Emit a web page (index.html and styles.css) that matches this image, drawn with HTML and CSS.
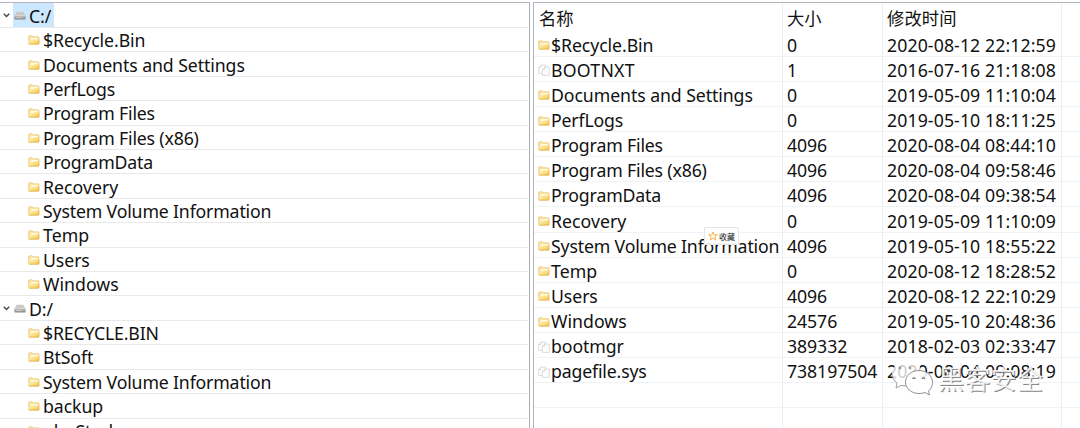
FILE: index.html
```html
<!DOCTYPE html>
<html lang="zh">
<head>
<meta charset="utf-8">
<title>文件管理</title>
<link rel="stylesheet" href="styles.css">
</head>
<body>
<svg class="defs" width="0" height="0" aria-hidden="true">
  <defs>
    <linearGradient id="gold" x1="0" y1="0" x2="1" y2="1"><stop offset="0" stop-color="#fff3c4"/><stop offset=".55" stop-color="#fbdf80"/><stop offset="1" stop-color="#f2c04a"/></linearGradient>
    <linearGradient id="metal" x1="0" y1="0" x2="0" y2="1"><stop offset="0" stop-color="#d0d0d0"/><stop offset="1" stop-color="#858585"/></linearGradient>
  </defs>
  <symbol id="folder" viewBox="0 0 12 10">
    <path d="M.7 8.5V1.6Q.7.8 1.5.8h2.7l1 1h5q.8 0 .8.8v5.9q0 .7-.8.7H1.4Q.7 9.2.7 8.5z" fill="#fae3a0" stroke="#eac673" stroke-width=".7"/>
    <path d="M2.8 3h6.9v2H2.8z" fill="#fffbe8"/>
    <path d="M1 8.9V5.2h3.4l1-1h5.5v4.7z" fill="url(#gold)"/>
    <path d="M1 9.1h9.8V4.6" fill="none" stroke="#e6b45a" stroke-width=".7"/>
  </symbol>
  <symbol id="drive" viewBox="0 0 12 9">
    <path d="M2.6.7h6.8l2.2 4.1H.4z" fill="#c8c8c8"/>
    <rect x=".3" y="4" width="11.4" height="4.4" rx=".9" fill="url(#metal)"/>
    <path d="M1 4.4h10M2 6.6h6" stroke="#e2e2e2" stroke-width=".6"/>
  </symbol>
  <symbol id="file" viewBox="0 0 12 12">
    <path d="M4.4 9.4H.7V3.3L3 1.1h4.6v2M.7 3.5H3V1.2" fill="#fff" stroke="#d2d2d2" stroke-width=".75"/>
    <path d="M4.400 5.200l2.200-2.100h4.700v8.200H4.400zM4.400 5.400h2.300V3.200" fill="#fff" stroke="#cdcdcd" stroke-width=".75"/>
  </symbol>
  <symbol id="chevron" viewBox="0 0 7 5"><path d="M.8.8l2.7 2.7L6.2.8" fill="none" stroke="#444" stroke-width="1.4"/></symbol>
</svg>
<main class="window">
  <ul class="tree">
    <li class="node drive"><svg class="chevron"><use href="#chevron"/></svg><span class="label selected"><svg class="drive-icon"><use href="#drive"/></svg>C:/</span></li>
    <li class="node"><svg class="icon"><use href="#folder"/></svg>$Recycle.Bin</li>
    <li class="node"><svg class="icon"><use href="#folder"/></svg>Documents and Settings</li>
    <li class="node tight"><svg class="icon"><use href="#folder"/></svg>PerfLogs</li>
    <li class="node tight"><svg class="icon"><use href="#folder"/></svg>Program Files</li>
    <li class="node tight"><svg class="icon"><use href="#folder"/></svg>Program Files (x86)</li>
    <li class="node tight"><svg class="icon"><use href="#folder"/></svg>ProgramData</li>
    <li class="node wide"><svg class="icon"><use href="#folder"/></svg>Recovery</li>
    <li class="node tight"><svg class="icon"><use href="#folder"/></svg>System Volume Information</li>
    <li class="node wide"><svg class="icon"><use href="#folder"/></svg>Temp</li>
    <li class="node"><svg class="icon"><use href="#folder"/></svg>Users</li>
    <li class="node wide"><svg class="icon"><use href="#folder"/></svg>Windows</li>
    <li class="node drive"><svg class="chevron"><use href="#chevron"/></svg><span class="label"><svg class="drive-icon"><use href="#drive"/></svg>D:/</span></li>
    <li class="node tight"><svg class="icon"><use href="#folder"/></svg>$RECYCLE.BIN</li>
    <li class="node"><svg class="icon"><use href="#folder"/></svg>BtSoft</li>
    <li class="node tight"><svg class="icon"><use href="#folder"/></svg>System Volume Information</li>
    <li class="node"><svg class="icon"><use href="#folder"/></svg>backup</li>
    <li class="node"><svg class="icon"><use href="#folder"/></svg>phpStudy</li>
  </ul>
  <section class="list">
    <div class="row head"><span>名称</span><span>大小</span><span>修改时间</span><span></span></div>
    <div class="row"><span><svg class="icon"><use href="#folder"/></svg>$Recycle.Bin</span><span>0</span><span>2020-08-12 22:12:59</span><span></span></div>
    <div class="row"><span class="wider"><svg class="icon file"><use href="#file"/></svg>BOOTNXT</span><span>1</span><span>2016-07-16 21:18:08</span><span></span></div>
    <div class="row"><span><svg class="icon"><use href="#folder"/></svg>Documents and Settings</span><span>0</span><span>2019-05-09 11:10:04</span><span></span></div>
    <div class="row"><span class="tight"><svg class="icon"><use href="#folder"/></svg>PerfLogs</span><span>0</span><span>2019-05-10 18:11:25</span><span></span></div>
    <div class="row"><span class="tight"><svg class="icon"><use href="#folder"/></svg>Program Files</span><span>4096</span><span>2020-08-04 08:44:10</span><span></span></div>
    <div class="row"><span class="tight"><svg class="icon"><use href="#folder"/></svg>Program Files (x86)</span><span>4096</span><span>2020-08-04 09:58:46</span><span></span></div>
    <div class="row"><span class="tight"><svg class="icon"><use href="#folder"/></svg>ProgramData</span><span>4096</span><span>2020-08-04 09:38:54</span><span></span></div>
    <div class="row"><span class="wide"><svg class="icon"><use href="#folder"/></svg>Recovery</span><span>0</span><span>2019-05-09 11:10:09</span><span></span></div>
    <div class="row"><span class="tight"><svg class="icon"><use href="#folder"/></svg>System Volume Information</span><span>4096</span><span>2019-05-10 18:55:22</span><span></span></div>
    <div class="row"><span class="wide"><svg class="icon"><use href="#folder"/></svg>Temp</span><span>0</span><span>2020-08-12 18:28:52</span><span></span></div>
    <div class="row"><span><svg class="icon"><use href="#folder"/></svg>Users</span><span>4096</span><span>2020-08-12 22:10:29</span><span></span></div>
    <div class="row"><span class="wide"><svg class="icon"><use href="#folder"/></svg>Windows</span><span>24576</span><span>2019-05-10 20:48:36</span><span></span></div>
    <div class="row"><span><svg class="icon file"><use href="#file"/></svg>bootmgr</span><span>389332</span><span>2018-02-03 02:33:47</span><span></span></div>
    <div class="row"><span class="tight"><svg class="icon file"><use href="#file"/></svg>pagefile.sys</span><span>738197504</span><span>2020-08-04 09:08:19</span><span></span></div>
    <div class="row"><span></span><span></span><span></span><span></span></div>
    <div class="row"><span></span><span></span><span></span><span></span></div>
  </section>
</main>
<div class="favorite"><svg width="10" height="10" viewBox="0 0 10 10"><path d="M5 .9l1.2 2.800 3 .2-2.300 2 .8 3L5 7.300 2.300 8.900l.8-3L.8 3.900l3-.2z" fill="#fffaf0" stroke="#f8ab32" stroke-width=".9"/></svg>收藏</div>
<div class="watermark">
  <svg width="46" height="38" viewBox="0 0 46 38">
    <path d="M17 2C8 2 2 7.500 2 14.500c0 4 2 7 5 9.500l-1 5 6-3c9 2 20-2 20-11.500C32 7 26 2 17 2z" fill="#fff" fill-opacity=".78"/>
    <path d="M2 15c.3 4 2 6.700 5 9l-1 5 5-2.500 6 .5" fill="none" stroke="#888" stroke-width=".8"/>
    <circle cx="10" cy="9" r="1.400" fill="#999"/><circle cx="20" cy="9" r="1.400" fill="#999"/>
    <path d="M29 11.500c-8 0-13.500 5.300-13.500 11.500S21 34.500 29 34.500c2 0 4-.3 6-1l4.500 2.500-1-4c2.500-2.200 4-5 4-8.500C42.500 17 37 11.500 29 11.500z" fill="#fff" fill-opacity=".88" stroke="#777" stroke-width=".8"/>
    <path d="M22.500 19.800q1.500-2 3 0M32 19.800q1.500-2 3 0" fill="none" stroke="#777" stroke-width="1.200"/>
  </svg>
  <span>黑客安全</span>
</div>
</body>
</html>
```
FILE: styles.css
```css
* { box-sizing: border-box; }
body {
  margin: 0;
  width: 1080px;
  height: 428px;
  overflow: hidden;
  position: relative;
  background: #fff;
  color: #111;
  font-family: "Noto Sans", "Noto Sans CJK SC", sans-serif;
  font-size: 17.7px;
  letter-spacing: -.08px;
}
.defs { position: absolute; }
.window {
  display: grid;
  grid-template-columns: 530px 547px;
  column-gap: 3px;
  height: 430px;
  padding-top: 2px;
}
.tree, .list { border-top: 1px solid #b2b5be; overflow: hidden; }
.tree {
  margin: 0;
  padding: 0 1px 0 0;
  list-style: none;
  border-right: 1px solid #a9abb5;
}
.node {
  display: flex;
  align-items: center;
  height: 24.42px;
  padding: 1px 0 0 28px;
  border-bottom: 1px solid #e9e9e9;
  white-space: nowrap;
  line-height: 24px;
}
.node:first-child { height: 25px; }
.drive { padding: 0 0 0 3px; }
.label {
  display: flex;
  align-items: center;
  height: 100%;
  margin-left: 3px;
  padding: 1px 3px 0 1px;
}
.selected { background: #cce8ff; }
.tight { letter-spacing: -.16px; }
.wide { letter-spacing: .04px; }
.wider { letter-spacing: .25px; }
.chevron { width: 7px; height: 5px; }
.icon { flex: none; width: 12px; height: 10px; margin-right: 3px; }
.drive-icon { width: 12px; height: 9px; margin-right: 3px; }
.list { border-left: 1px solid #b2b5be; width: 547px; }
.row {
  display: grid;
  grid-template-columns: 249px 100px 179px 1fr;
  height: 25.14px;
  border-bottom: 1px solid #f0f3f5;
  line-height: 25px;
  white-space: nowrap;
}
.row > span {
  display: flex;
  align-items: center;
  height: 100%;
  padding: 1.2px 0 0 4px;
  border-right: 1px solid #e8f0f5;
}
.row > span:nth-child(3) { letter-spacing: .1px; }
.row > span:last-child { border-right: 0; }
.row .icon { margin-right: 1px; }
.row .file { width: 12px; height: 12px; }
.head { height: 28.5px; border-bottom: 0; font-family: "Noto Sans CJK SC", sans-serif; font-size: 17.3px; }
.head > span { padding-top: 0; }
.head > span:first-child { padding-left: 5px; }
.favorite {
  position: absolute;
  left: 704px;
  top: 227px;
  display: flex;
  align-items: center;
  gap: 1px;
  width: 35px;
  height: 18px;
  padding-left: 3px;
  border: 1px solid #e5e5e5;
  border-radius: 2px;
  background: rgba(255,255,255,.9);
  font: 8px "Noto Sans CJK SC", sans-serif;
}
.watermark {
  position: absolute;
  left: 890px;
  top: 359px;
  display: flex;
  align-items: center;
  gap: 2px;
  color: rgba(255,255,255,.9);
  font: 26px/38px "Noto Sans CJK SC", sans-serif;
  letter-spacing: .3px;
  text-shadow: 1px 1px 0 #888;
}
```
